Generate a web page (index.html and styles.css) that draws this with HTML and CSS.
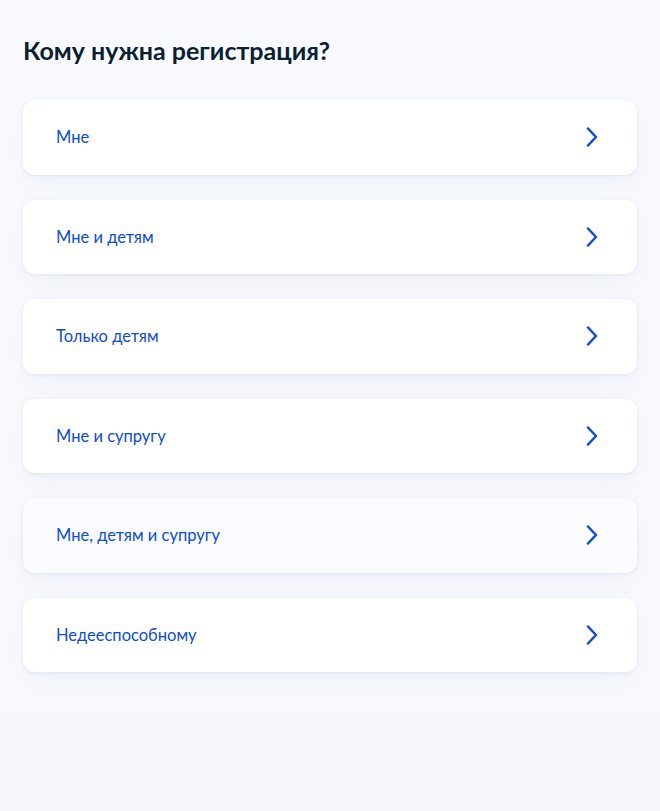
FILE: index.html
```html
<!DOCTYPE html>
<html lang="ru">
<head>
    <meta charset="UTF-8">
    <meta name="viewport" content="width=device-width, initial-scale=1.0">
    <title>Кому нужна регистрация?</title>
    <link rel="stylesheet" href="styles.css">
</head>
<body>
    <main class="page">
        <h1 class="title">Кому нужна регистрация?</h1>
        <ul class="options">
            <li class="option">
                <span class="option-text">Мне</span>
                <svg class="chevron" width="14" height="20" viewBox="0 0 14 20"><path d="M3 1.5 L11 10 L3 18.5" /></svg>
            </li>
            <li class="option">
                <span class="option-text">Мне и детям</span>
                <svg class="chevron" width="14" height="20" viewBox="0 0 14 20"><path d="M3 1.5 L11 10 L3 18.5" /></svg>
            </li>
            <li class="option">
                <span class="option-text">Только детям</span>
                <svg class="chevron" width="14" height="20" viewBox="0 0 14 20"><path d="M3 1.5 L11 10 L3 18.5" /></svg>
            </li>
            <li class="option">
                <span class="option-text">Мне и супругу</span>
                <svg class="chevron" width="14" height="20" viewBox="0 0 14 20"><path d="M3 1.5 L11 10 L3 18.5" /></svg>
            </li>
            <li class="option option-hover">
                <span class="option-text">Мне, детям и супругу</span>
                <svg class="chevron" width="14" height="20" viewBox="0 0 14 20"><path d="M3 1.5 L11 10 L3 18.5" /></svg>
            </li>
            <li class="option">
                <span class="option-text">Недееспособному</span>
                <svg class="chevron" width="14" height="20" viewBox="0 0 14 20"><path d="M3 1.5 L11 10 L3 18.5" /></svg>
            </li>
        </ul>
    </main>
</body>
</html>
```

FILE: styles.css
```css
body {
    margin: 0;
    font-family: Lato, "Noto Sans", sans-serif;
    background-color: #f5f7fb;
    min-height: 811px;
}

.page {
    background-color: #f9fafe;
    padding: 34px 23px 40px;
}

.title {
    margin: 0 0 34px;
    font-size: 25px;
    line-height: 32px;
    font-weight: 700;
    color: #0b1f33;
}

.options {
    list-style: none;
    margin: 0;
    padding: 0;
    display: flex;
    flex-direction: column;
    gap: 25px;
}

.option {
    display: flex;
    align-items: center;
    justify-content: space-between;
    height: 74.5px;
    box-sizing: border-box;
    padding: 0 38px 0 33px;
    background-color: #fff;
    border-radius: 12px;
    box-shadow: 0 1px 4px rgba(88, 118, 184, 0.12), 0 12px 28px rgba(88, 118, 184, 0.06);
    cursor: pointer;
}

.option-hover {
    background-color: #fafcff;
}

.option-text {
    font-size: 16.5px;
    color: #0d4cd3;
}

.chevron {
    display: block;
    fill: none;
    stroke: #0d4cd3;
    stroke-width: 2.5;
    stroke-linecap: round;
    stroke-linejoin: round;
}
```
